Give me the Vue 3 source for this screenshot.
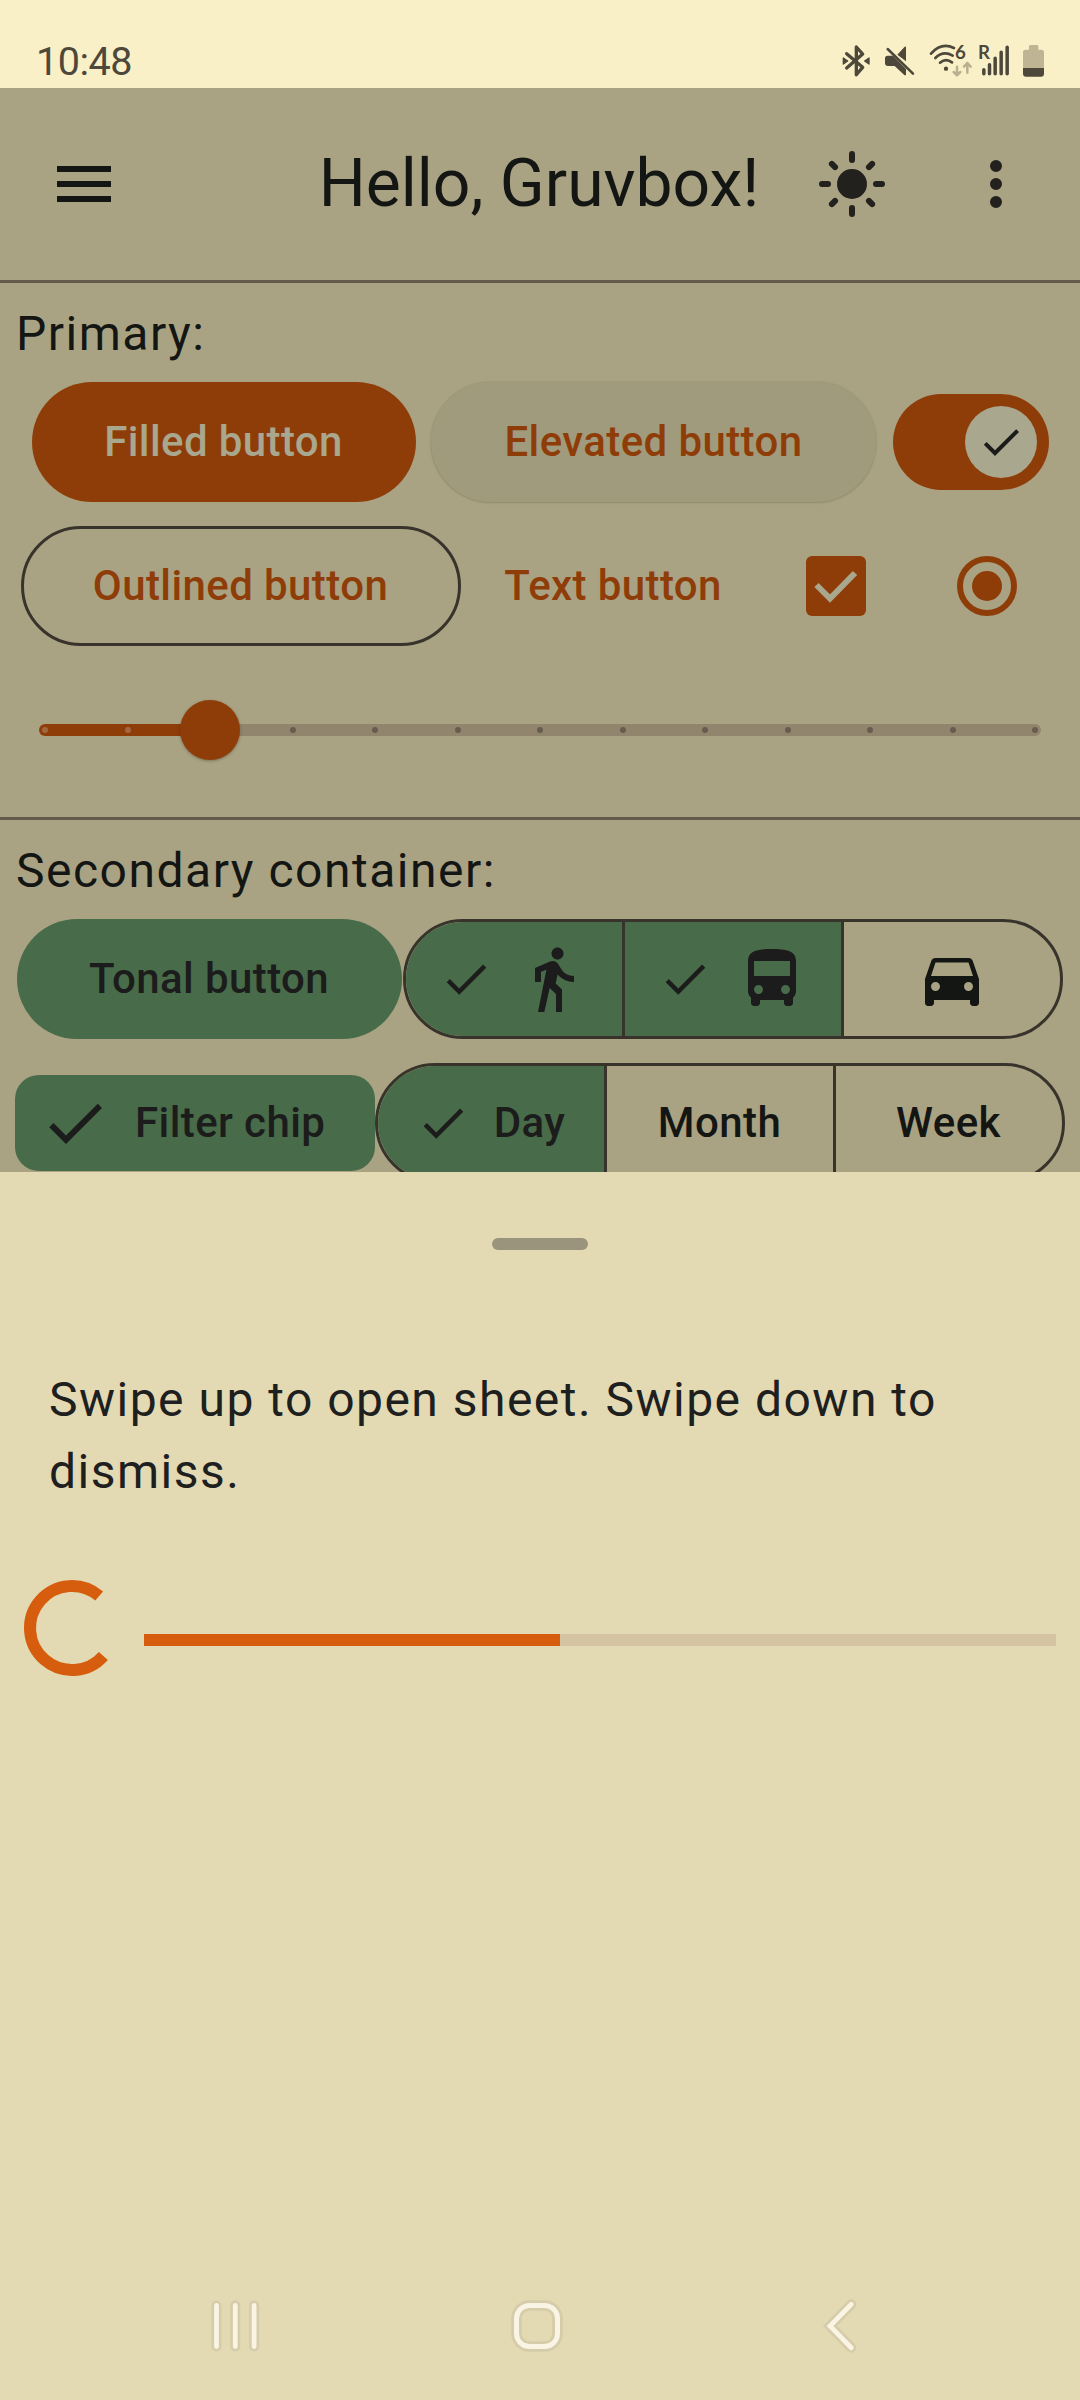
<script setup>
const ticks = Array.from({ length: 13 }, (_, i) => i)
const sliderValue = 2

const checkPath = 'M9 16.17L4.83 12l-1.42 1.41L9 19 21 7l-1.41-1.41z'
const transport = [
  {
    name: 'walk',
    selected: true,
    path: 'M13.5 5.5c1.1 0 2-.9 2-2s-.9-2-2-2-2 .9-2 2 .9 2 2 2zM9.8 8.9L7 23h2.1l1.8-8 2.1 2v6h2v-7.5l-2.1-2 .6-3C14.8 12 16.8 13 19 13v-2c-1.9 0-3.5-1-4.3-2.4l-1-1.6c-.4-.6-1-1-1.7-1-.3 0-.5.1-.8.1L6 8.3V13h2V9.6l1.8-.7'
  },
  {
    name: 'bus',
    selected: true,
    path: 'M4 16c0 .88.39 1.67 1 2.22V20c0 .55.45 1 1 1h1c.55 0 1-.45 1-1v-1h8v1c0 .55.45 1 1 1h1c.55 0 1-.45 1-1v-1.78c.61-.55 1-1.34 1-2.22V6c0-3.5-3.58-4-8-4s-8 .5-8 4v10zm3.5 1c-.83 0-1.5-.67-1.5-1.5S6.67 14 7.5 14s1.5.67 1.5 1.5S8.33 17 7.5 17zm9 0c-.83 0-1.5-.67-1.5-1.5s.67-1.5 1.5-1.5 1.5.67 1.5 1.5-.67 1.5-1.5 1.5zm1.5-6H6V6h12v5z'
  },
  {
    name: 'car',
    selected: false,
    path: 'M18.92 6.01C18.72 5.42 18.16 5 17.5 5h-11c-.66 0-1.21.42-1.42 1.01L3 12v8c0 .55.45 1 1 1h1c.55 0 1-.45 1-1v-1h12v1c0 .55.45 1 1 1h1c.55 0 1-.45 1-1v-8l-2.08-5.99zM6.5 16c-.83 0-1.5-.67-1.5-1.5S5.67 13 6.5 13s1.5.67 1.5 1.5S7.33 16 6.5 16zm11 0c-.83 0-1.5-.67-1.5-1.5s.67-1.5 1.5-1.5 1.5.67 1.5 1.5-.67 1.5-1.5 1.5zM5 11l1.5-4.5h11L19 11H5z'
  }
]
const periods = [
  { label: 'Day', selected: true },
  { label: 'Month', selected: false },
  { label: 'Week', selected: false }
]
</script>

<template>
  <div class="screen">
    <div class="status">
      <span class="time">10:48</span>
      <div class="status-icons">
        <svg width="28" height="34" viewBox="36 42 84 102">
          <path d="M50 71L98 112L79 134V51L98 72L50 114" fill="none" stroke="#4d483a" stroke-width="10" stroke-linejoin="round" stroke-linecap="round" />
          <path d="M40 84l13 9-13 9zM117 84l-13 9 13 9z" fill="#4d483a" stroke="#4d483a" stroke-width="4" stroke-linejoin="round" />
        </svg>
        <svg class="g14" width="31" height="34" viewBox="162 42 93 102">
          <path d="M202 74L224 50q4-2 4 2V94zM173 77h16L228 117v17q-2 3-6 0L194 108H174q-9 0-9-9V85q0-8 8-8z" fill="#4d483a" />
          <path d="M173 57L249 131" stroke="#4d483a" stroke-width="7.5" stroke-linecap="round" />
        </svg>
        <svg class="g14" width="44" height="34" viewBox="297 42 132 102">
          <g fill="none" stroke="#4d483a" stroke-width="8" stroke-linecap="round">
            <path d="M303 71Q334 36 372 54" />
            <path d="M316 84Q340 61 368 77" />
            <path d="M330 98Q348 83 366 97" />
          </g>
          <circle cx="348" cy="116" r="6.5" fill="#4d483a" />
          <text x="375" y="87" font-family="Lato, sans-serif" font-weight="700" font-size="56" fill="#4d483a">6</text>
          <g fill="none" stroke="#b9b08f" stroke-width="7.5" stroke-linecap="round" stroke-linejoin="round">
            <path d="M381 110V136M371 126L381 136L391 126" />
            <path d="M412 128V99M402 110L412 99L422 110" />
          </g>
        </svg>
        <svg class="g5" width="32" height="34" viewBox="444 42 96 102">
          <text x="444" y="88" font-family="Lato, sans-serif" font-weight="700" font-size="56" fill="#4d483a">R</text>
          <path d="M461.5 119V131M478.5 104V131M495.5 85V131M513.5 67V131M531.5 52V131" stroke="#4d483a" stroke-width="10.5" stroke-linecap="round" />
        </svg>
        <svg class="g12" width="23" height="34" viewBox="576 42 69 102">
          <path d="M597 49q0-4 4-4h20q4 0 4 4v10h9q8 0 8 8V114H579V67q0-8 8-8h10z" fill="#bfb595" />
          <path d="M579 114H642V131q0 9-9 9H588q-9 0-9-9z" fill="#4d483a" />
        </svg>
      </div>
    </div>

    <div class="content">
      <header class="appbar">
        <div class="lead">
          <svg class="i24" viewBox="0 0 24 24"><path fill="#141613" d="M3 18h18v-2H3v2zm0-5h18v-2H3v2zm0-7v2h18V6H3z" /></svg>
        </div>
        <h1>Hello, Gruvbox!</h1>
        <div class="actions">
          <svg class="i24" viewBox="0 0 24 24">
            <circle cx="12" cy="12" r="5" fill="#23211e" />
            <path d="M12 2v2M12 20v2M2 12h2M20 12h2M5.29 5.29l1.06 1.06M17.65 17.65l1.06 1.06M18.71 5.29l-1.06 1.06M6.35 17.65l-1.06 1.06" stroke="#23211e" stroke-width="2" stroke-linecap="round" />
          </svg>
          <svg class="i24" viewBox="0 0 24 24"><path fill="#23211e" d="M12 8a2 2 0 1 0 0-4 2 2 0 0 0 0 4zm0 2a2 2 0 1 0 0 4 2 2 0 0 0 0-4zm0 6a2 2 0 1 0 0 4 2 2 0 0 0 0-4z" /></svg>
        </div>
      </header>

      <section class="primary">
        <h2>Primary:</h2>
        <div class="row row-a">
          <button class="btn filled">Filled button</button>
          <button class="btn elevated">Elevated button</button>
          <div class="switch">
            <div class="thumb"><svg width="48" height="48" viewBox="0 0 24 24"><path :d="checkPath" fill="#1b1c1a" /></svg></div>
          </div>
        </div>
        <div class="row row-b">
          <button class="btn outlined">Outlined button</button>
          <button class="btn text">Text button</button>
          <div class="checkbox">
            <svg width="60" height="60" viewBox="0 0 60 60"><path d="M10.5 29L24 42.5L49 17" fill="none" stroke="#a9a78e" stroke-width="6" /></svg>
          </div>
          <div class="radio"><i></i></div>
        </div>
        <div class="slider">
          <div class="rail">
            <i v-for="t in ticks" :key="t" :class="{ on: t < sliderValue, hidden: t === sliderValue }"></i>
          </div>
          <div class="knob"></div>
        </div>
      </section>

      <section class="secondary">
        <h2>Secondary container:</h2>
        <div class="row row-c">
          <button class="btn tonal">Tonal button</button>
          <div class="segments">
            <div v-for="t in transport" :key="t.name" class="seg" :class="{ selected: t.selected }">
              <svg v-if="t.selected" class="i18" viewBox="0 0 24 24"><path :d="checkPath" fill="#1b1c1b" /></svg>
              <svg class="i24" viewBox="0 0 24 24"><path :d="t.path" :fill="t.selected ? '#1b1c1b' : '#141613'" /></svg>
            </div>
          </div>
        </div>
        <div class="row row-d">
          <div class="chip">
            <svg class="i24" viewBox="0 0 24 24"><path :d="checkPath" fill="#1b1c1b" /></svg>
            <span>Filter chip</span>
          </div>
          <div class="segments wide">
            <div v-for="p in periods" :key="p.label" class="seg" :class="{ selected: p.selected }">
              <svg v-if="p.selected" class="i18" viewBox="0 0 24 24"><path :d="checkPath" fill="#1b1c1b" /></svg>
              <span>{{ p.label }}</span>
            </div>
          </div>
        </div>
      </section>
    </div>

    <div class="sheet">
      <div class="handle"></div>
      <p>Swipe up to open sheet. Swipe down to dismiss.</p>
      <div class="progress">
        <svg width="96" height="96" viewBox="0 0 96 96"><path d="M79.4 75.9A42 42 0 1 1 75.2 16" fill="none" stroke="#d65d0e" stroke-width="12" /></svg>
        <div class="bar"><div class="bar-fill"></div></div>
      </div>
      <nav class="nav">
        <svg width="60" height="60" viewBox="0 0 60 60">
          <g stroke-linecap="round">
            <path d="M11.5 9.5V50.5M30.3 9.5V50.5M49.1 9.5V50.5" stroke="#d5cca9" stroke-width="10" />
            <path d="M11.5 9.5V50.5M30.3 9.5V50.5M49.1 9.5V50.5" stroke="#f9f4e3" stroke-width="4.8" />
          </g>
        </svg>
        <svg width="60" height="60" viewBox="0 0 60 60">
          <g fill="none">
            <rect x="11.5" y="9.5" width="41" height="41" rx="13" stroke="#d5cca9" stroke-width="10.5" />
            <rect x="11.5" y="9.5" width="41" height="41" rx="13" stroke="#f9f4e3" stroke-width="5" />
          </g>
        </svg>
        <svg width="60" height="60" viewBox="0 0 60 60">
          <g fill="none" stroke-linecap="round">
            <path d="M46.3 8.3L25 30L46.3 51.7" stroke="#d5cca9" stroke-width="10" />
            <path d="M46.3 8.3L25 30L46.3 51.7" stroke="#f9f4e3" stroke-width="4.8" />
          </g>
        </svg>
      </nav>
    </div>
  </div>
</template>

<style>
body {
  margin: 0;
  background: #e3d9b2;
}
</style>

<style scoped>
* {
  box-sizing: border-box;
}
.screen {
  width: 1080px;
  height: 2400px;
  display: flex;
  flex-direction: column;
  overflow: hidden;
  background: #a9a384;
  font-family: Roboto, sans-serif;
  color: #141613;
}
svg {
  display: block;
  flex: none;
  overflow: visible;
}
.status {
  flex: none;
  height: 88px;
  padding: 0 35px 0 36px;
  display: flex;
  justify-content: space-between;
  background: #faf0c8;
}
.time {
  padding-top: 39px;
  font-size: 39.5px;
  line-height: 46px;
  letter-spacing: -0.5px;
  color: #4d483a;
}
.status-icons {
  display: flex;
  padding-top: 44px;
}
.g14 { margin-left: 14px; }
.g5 { margin-left: 5px; }
.g12 { margin-left: 12px; }

.content {
  flex: none;
  height: 1084px;
  overflow: hidden;
}
.i24 { width: 72px; height: 72px; }
.i18 { width: 54px; height: 54px; }
.appbar {
  height: 195px;
  padding: 0 48px;
  display: grid;
  grid-template-columns: 1fr auto 1fr;
  align-items: center;
  border-bottom: 3px solid #655b4b;
}
h1 {
  margin: 0 1px 0 -1px;
  font-size: 66px;
  line-height: 84px;
  font-weight: 400;
  white-space: nowrap;
}
.actions {
  display: flex;
  justify-content: flex-end;
  gap: 72px;
}
h2 {
  margin: 0;
  padding: 15px 16px 0;
  font-size: 48px;
  line-height: 72px;
  font-weight: 400;
  letter-spacing: 1.5px;
}
.primary {
  height: 537px;
  border-bottom: 3px solid #655b4b;
}
.row {
  display: flex;
  align-items: center;
}
.btn {
  flex: none;
  height: 120px;
  padding: 0;
  border: 0;
  border-radius: 60px;
  background: none;
  font: 500 42px/60px Roboto, sans-serif;
  letter-spacing: 0.4px;
  text-align: center;
  white-space: nowrap;
  color: #8f3d08;
}
.row-a { margin: 12px 0 0 32px; }
.filled {
  width: 384px;
  padding-right: 1px;
  background: #8f3d08;
  color: #a9a78e;
}
.elevated {
  width: 445px;
  margin-left: 15px;
  background: #a19b7d;
  box-shadow: 0 0 2px rgba(90, 80, 40, 0.25), 0 1px 2px rgba(90, 80, 40, 0.2);
}
.switch {
  width: 156px;
  height: 96px;
  margin-left: 17px;
  padding-right: 12px;
  border-radius: 48px;
  display: flex;
  align-items: center;
  justify-content: flex-end;
  background: #8f3d08;
}
.thumb {
  width: 72px;
  height: 72px;
  border-radius: 50%;
  display: flex;
  align-items: center;
  justify-content: center;
  background: #a9a78e;
}
.row-b { margin: 24px 0 0 21px; }
.outlined {
  width: 440px;
  padding-right: 1px;
  border: 3px solid #38332b;
}
.text {
  width: 288px;
  margin-left: 8px;
}
.checkbox {
  width: 60px;
  height: 60px;
  margin-left: 49px;
  border-radius: 6px;
  background: #8f3d08;
}
.radio {
  width: 60px;
  height: 60px;
  margin-left: 91px;
  border: 6px solid #8f3d08;
  border-radius: 50%;
  display: flex;
  align-items: center;
  justify-content: center;
}
.radio i {
  width: 30px;
  height: 30px;
  border-radius: 50%;
  background: #8f3d08;
}
.slider {
  position: relative;
  margin: 54px 39px 0;
  height: 60px;
  display: flex;
  align-items: center;
}
.rail {
  flex: 1;
  height: 12px;
  padding: 0 3px;
  border-radius: 6px;
  display: flex;
  align-items: center;
  justify-content: space-between;
  background: linear-gradient(to right, #8f3d08 171px, #91856d 171px);
}
.rail i {
  width: 6px;
  height: 6px;
  border-radius: 50%;
  background: #665d4e;
}
.rail i.on { background: #a3683f; }
.rail i.hidden { visibility: hidden; }
.knob {
  position: absolute;
  left: 141px;
  top: 0;
  width: 60px;
  height: 60px;
  border-radius: 50%;
  background: #8f3d08;
  box-shadow: 0 1px 3px rgba(40, 30, 10, 0.35);
}
.row-c { margin: 12px 0 0 17px; }
.tonal {
  width: 385px;
  padding-right: 1px;
  background: #486b49;
  color: #1b1c1b;
}
.segments {
  flex: none;
  width: 660px;
  height: 120px;
  margin-left: 1px;
  border: 3px solid #38332b;
  border-radius: 60px;
  display: flex;
  overflow: hidden;
  font-size: 42px;
  line-height: 60px;
  font-weight: 500;
  letter-spacing: 0.4px;
}
.seg {
  flex: 1;
  display: flex;
  align-items: center;
  justify-content: center;
  gap: 24px;
}
.seg + .seg { border-left: 3px solid #38332b; }
.seg:first-child { flex: 0 0 216px; }
.seg:last-child { flex: 0 0 219px; }
.wide .seg { padding-right: 1px; }
.wide .seg:first-child { flex-basis: 226px; }
.wide .seg:last-child { flex-basis: 229px; }
.selected {
  background: #486b49;
  color: #1b1c1b;
}
.row-d {
  margin: 24px 0 0 15px;
}
.wide {
  width: 690px;
  margin-left: 0;
}
.chip {
  flex: none;
  width: 360px;
  height: 96px;
  padding-left: 24px;
  border-radius: 24px;
  display: flex;
  align-items: center;
  gap: 24px;
  background: #486b49;
  color: #1b1c1b;
  font-size: 42px;
  line-height: 60px;
  font-weight: 500;
  letter-spacing: 0.4px;
  white-space: nowrap;
}
.sheet {
  flex: 1;
  display: flex;
  flex-direction: column;
  background: #e3d9b2;
}
.handle {
  width: 96px;
  height: 12px;
  margin: 66px auto 0;
  border-radius: 6px;
  background: #9b947c;
}
p {
  margin: 114px 48px 0 49px;
  font-size: 48px;
  line-height: 72px;
  letter-spacing: 1.48px;
  color: #1d201e;
}
.progress {
  display: flex;
  align-items: flex-start;
  margin: 72px 24px 0;
}
.bar {
  flex: 1;
  height: 12px;
  margin: 54px 0 0 24px;
  background: #d5c4a1;
}
.bar-fill {
  width: 416px;
  height: 12px;
  background: #d65d0e;
}
.nav {
  margin: auto 215px 44px 205px;
  display: flex;
  justify-content: space-between;
}
</style>
